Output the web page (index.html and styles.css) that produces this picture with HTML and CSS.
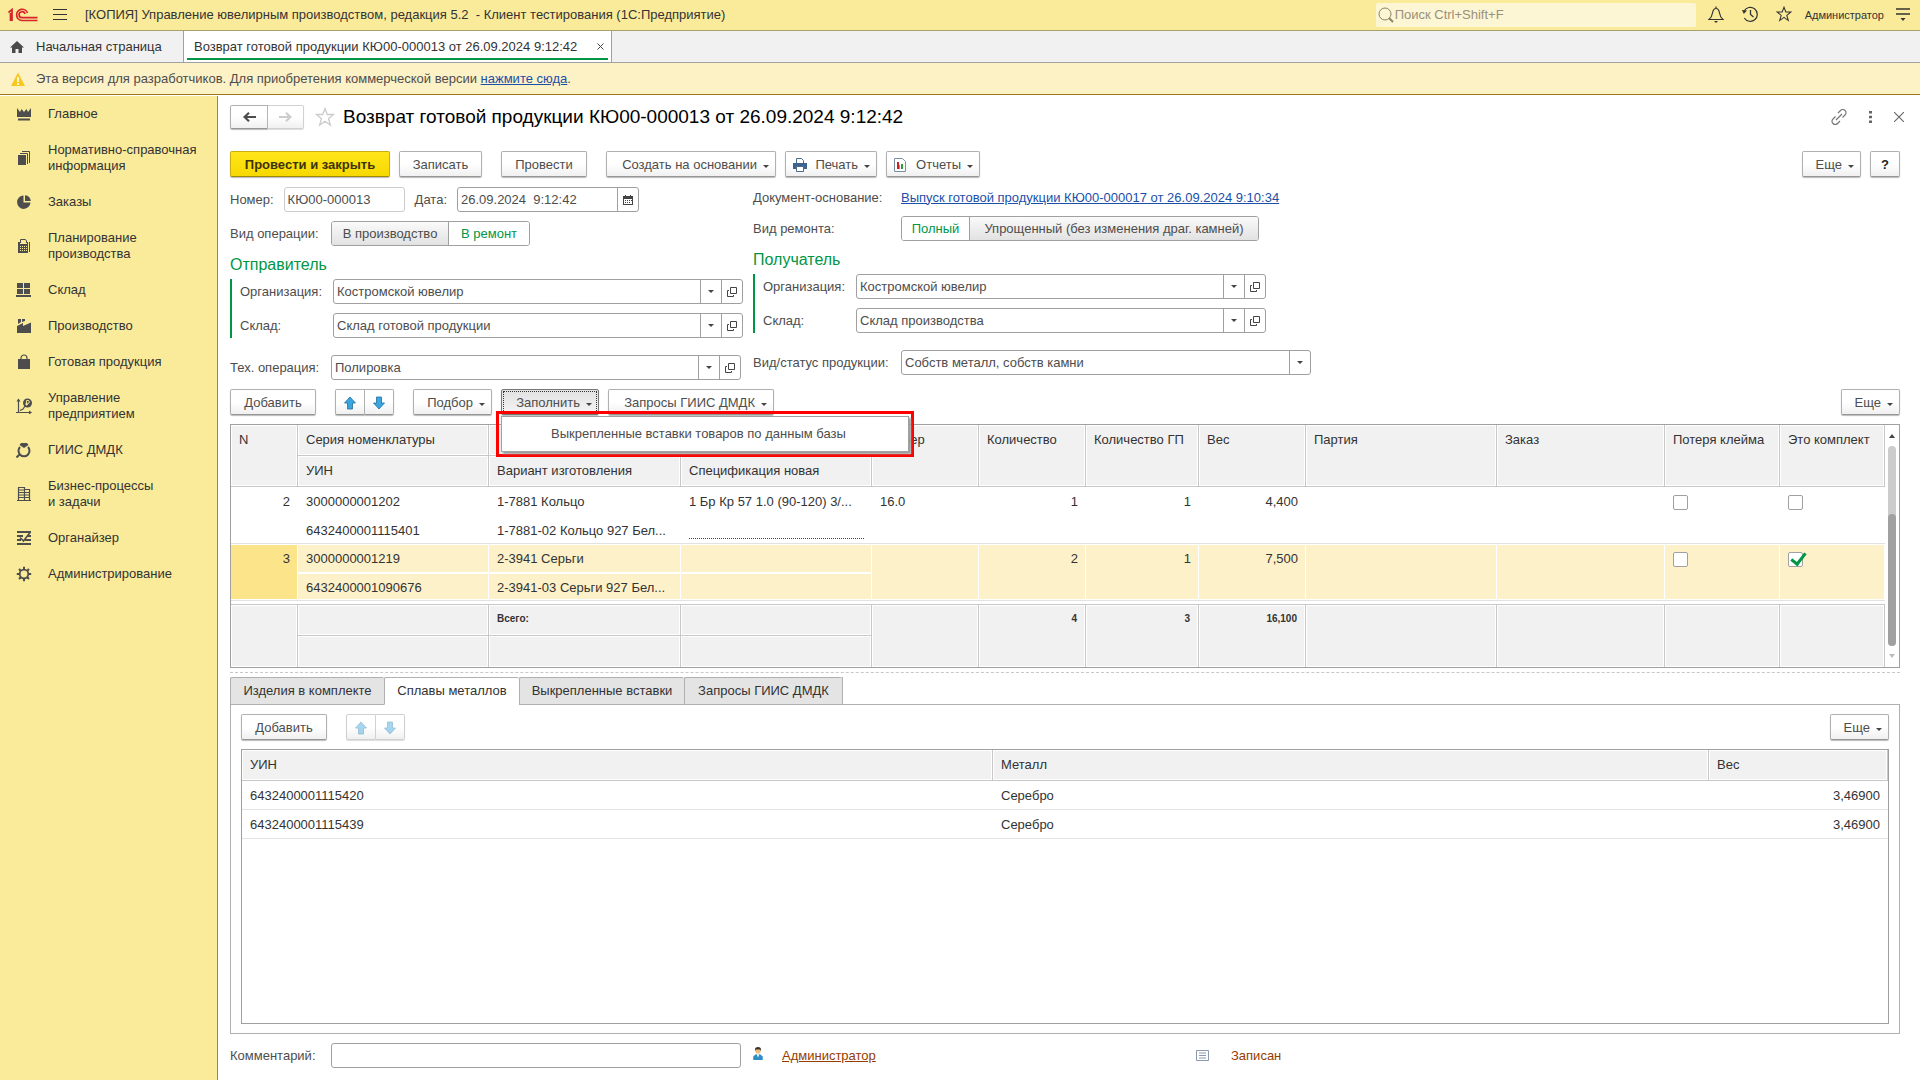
FILE: index.html
```html
<!DOCTYPE html>
<html lang="ru">
<head>
<meta charset="utf-8">
<title>Возврат готовой продукции КЮ00-000013 от 26.09.2024 9:12:42</title>
<link rel="stylesheet" href="styles.css">
</head>
<body>
<svg class="sprite" aria-hidden="true">
  <symbol id="i-open" viewBox="0 0 10 10"><path d="M3.500.5h6v6h-6z M2 3.500H.5v6h6V8" fill="none" stroke="#444"/></symbol>
  <symbol id="i-up" viewBox="0 0 12 14"><path d="M6 1l5.500 6H8.500v6h-5V7H.5z" fill="#3aa6e0" stroke="#22709f" stroke-width=".8"/></symbol>
  <symbol id="i-down" viewBox="0 0 12 14"><path d="M6 13l5.500-6H8.500V1h-5v6H.5z" fill="#3aa6e0" stroke="#22709f" stroke-width=".8"/></symbol>
  <symbol id="i-star" viewBox="0 0 20 20"><path d="M10 1.500l2.300 6h6.200l-5 4.200 1.900 6.500-5.400-3.900-5.400 3.900 1.900-6.500-5-4.200h6.200z" fill="none" stroke="currentColor" stroke-width="1.300"/></symbol>
</svg>

<header class="topbar">
  <svg class="logo" width="30" height="14" viewBox="0 0 30 14"><g fill="none" stroke="#d8232a" stroke-width="1.700"><path d="M.5 4.500L4 1.500V13M2.500 5v8"/><path d="M19.500 5A5.600 5.600 0 1 0 14 12.500H29.500"/><path d="M17 6A3 3 0 1 0 14 9.700H29.500"/></g></svg>
  <svg width="14" height="11" viewBox="0 0 14 11"><path d="M0 .5h14M0 5.500h14M0 10.500h14" stroke="#333"/></svg>
  <h1 class="app-title">[КОПИЯ] Управление ювелирным производством, редакция 5.2 &nbsp;- Клиент тестирования (1С:Предприятие)</h1>
  <div class="search">
    <svg width="16" height="16" viewBox="0 0 16 16"><circle cx="7" cy="7" r="6" fill="none" stroke="#8a8460"/><path d="M11 11l4 4" stroke="#8a8460" stroke-width="2"/></svg>
    <input type="search" aria-label="Поиск" placeholder="Поиск Ctrl+Shift+F">
  </div>
  <div class="top-icons">
    <svg width="16" height="17" viewBox="0 0 16 17"><path d="M1 13.500h14c-2.500-2-3-3.500-3.500-6.500S10 2.500 8 2.500 5 4 4.500 7 3.500 11.500 1 13.500zM8 .5v2" fill="none" stroke="#333" stroke-width="1.200"/><path d="M6 15h4l-2 2z" fill="#333"/></svg>
    <svg width="16" height="16" viewBox="0 0 16 16"><path d="M2 5.200A7 7 0 1 1 2.300 12" fill="none" stroke="#333" stroke-width="1.200"/><path d="M0 4l5 .6L1.800 8z" fill="#333"/><path d="M8.500 4v4.500l3 2.500" fill="none" stroke="#333" stroke-width="1.300"/></svg>
    <svg width="16" height="16"><use href="#i-star"/></svg>
  </div>
  <span class="user">Администратор</span>
  <svg width="14" height="13" viewBox="0 0 14 13"><path d="M0 1h14M0 6h14" stroke="#333" stroke-width="1.300"/><path d="M4.500 10h5L7 13z" fill="#333"/></svg>
</header>

<nav class="tabs">
  <a class="tab" href="#home"><svg width="14" height="12" viewBox="0 0 14 12"><path d="M7 0l7 6.500h-2V12H8.500V8h-3v4H2V6.500H0z" fill="#4a4a4a"/></svg>Начальная страница</a>
  <a class="tab current" href="#doc"><span>Возврат готовой продукции КЮ00-000013 от 26.09.2024 9:12:42</span><svg width="7" height="7" viewBox="0 0 7 7"><path d="M.5.5l6 6M6.500.5l-6 6" stroke="#444"/></svg></a>
</nav>

<div class="notice">
  <svg width="14" height="14" viewBox="0 0 14 14"><path d="M7 .5L14 14H0z" fill="#f7c920"/><path d="M7 5v5M7 11v2" stroke="#fff" stroke-width="1.600"/></svg>
  <p>Эта версия для разработчиков. Для приобретения коммерческой версии <a href="#buy">нажмите сюда</a>.</p>
</div>

<div class="workspace">
  <nav class="sidebar">
    <a href="#s1"><svg viewBox="0 0 16 16"><path d="M1 2l3 4L5.500 3 8 6l2.500-3L12 6l3-4v9H1zM2 12.500h12V14.500H2z"/></svg>Главное</a>
    <a href="#s2"><svg viewBox="0 0 16 16"><path d="M2 5h8v10H2z"/><path d="M4 3.500h7.500V14M6 1.500h7.500V13" fill="none" stroke="#4d4d4d"/></svg>Нормативно-справочная<br>информация</a>
    <a href="#s3"><svg viewBox="0 0 16 16"><path d="M7.500 1.500a6.700 6.700 0 1 0 7 7H7.500zM9 1.200V7h5.800A6.500 6.500 0 0 0 9 1.200z"/></svg>Заказы</a>
    <a href="#s4"><svg viewBox="0 0 16 16"><path d="M4.500 5V1.500h5L10.500 3v2" fill="none" stroke="#4d4d4d"/><path d="M2 4h2v2h7V4h1v11H2zM13 4h1v10h-1z"/><path d="M4 8h1v1H4zM6 8h1v1H6zM8 8h1v1H8zM10 8h1v1h-1zM4 10h1v1H4zM6 10h1v1H6zM8 10h1v1H8zM10 10h1v1h-1zM4 12h1v1H4zM6 12h1v1H6zM8 12h1v1H8zM10 12h1v1h-1z" fill="#faeb9b"/></svg>Планирование<br>производства</a>
    <a href="#s5"><svg viewBox="0 0 16 16"><path d="M1 1h6v5H1zM8 1h6v5H8zM1 7h6v5H1zM8 7h6v5H8zM0 13h15v2H0z"/></svg>Склад</a>
    <a href="#s6"><svg viewBox="0 0 16 16"><path d="M1 8l6-3v3l8-3.500V15H1zM2 1h3v3L2 6zM6 1h3v2L6 4z"/></svg>Производство</a>
    <a href="#s7"><svg viewBox="0 0 16 16"><path d="M2 5h12v10H2z"/><path d="M5 7V4a3 3 0 0 1 6 0v3" fill="none" stroke="#4d4d4d" stroke-width="1.200"/></svg>Готовая продукция</a>
    <a href="#s8"><svg viewBox="0 0 16 16"><path d="M2.500 1v13.500H14M0 14.500h3M4 12.500l3-1.500 2-3" fill="none" stroke="#4d4d4d" stroke-width="1.200"/><path d="M.5 3.500l2-3 2 3zM13 12.500l3 2-3 2z"/><circle cx="11.500" cy="5" r="4.500"/><path d="M10.500 7.500v-5h1.500a1.300 1.300 0 0 1 0 2.800H9.500M9.500 6.500h2.500" fill="none" stroke="#faeb9b" stroke-width=".9"/></svg>Управление<br>предприятием</a>
    <a href="#s9"><svg viewBox="0 0 16 16"><path d="M4 5a5.500 5.500 0 1 0 8 0M4 12l-3.500 3.500" fill="none" stroke="#4d4d4d" stroke-width="2"/><path d="M5 1h6l1.500 2L8 6 3.500 3z"/></svg>ГИИС ДМДК</a>
    <a href="#s10"><svg viewBox="0 0 16 16"><path d="M2.500 15V1.500h6V15M8.500 3.500h5V15M1 14.500h14M3 4h5M3 6.500h5M3 9h5M3 11.500h5M9 6.500h4M9 9h4M9 11.500h4" fill="none" stroke="#4d4d4d" stroke-width="1.200"/></svg>Бизнес-процессы<br>и задачи</a>
    <a href="#s11"><svg viewBox="0 0 16 16"><path d="M1 2h14M1 6h6M11 6h4M1 10h4M9 10h6M1 14h14" stroke="#4d4d4d" stroke-width="1.800"/><path d="M4 7.500L7.500 11 14 2.500" fill="none" stroke="#4d4d4d" stroke-width="1.600"/></svg>Органайзер</a>
    <a href="#s12"><svg viewBox="0 0 16 16"><circle cx="8" cy="8" r="4.300" fill="none" stroke="#4d4d4d" stroke-width="1.800"/><path d="M8 .8v3M8 12.200v3M.8 8h3M12.200 8h3M3 3l2 2M11 11l2 2M13 3l-2 2M5 11l-2 2" stroke="#4d4d4d" stroke-width="2"/></svg>Администрирование</a>
  </nav>

  <main class="doc">
    <div class="doc-head">
      <div class="pair">
        <button type="button" class="btn nav" aria-label="Назад"><svg width="13" height="10" viewBox="0 0 13 10"><path d="M13 5H2M6 .8L1.500 5 6 9.200" fill="none" stroke="#4d4d4d" stroke-width="2.200"/></svg></button>
        <button type="button" class="btn nav off" aria-label="Вперед"><svg width="13" height="10" viewBox="0 0 13 10"><path d="M0 5h11M7 .8L11.500 5 7 9.200" fill="none" stroke="#ccc" stroke-width="2.200"/></svg></button>
      </div>
      <svg class="fav" width="20" height="20"><use href="#i-star"/></svg>
      <h2>Возврат готовой продукции КЮ00-000013 от 26.09.2024 9:12:42</h2>
      <div class="win-icons">
        <svg width="16" height="16" viewBox="0 0 16 16"><g fill="none" stroke="#777" stroke-width="1.200"><path d="M7 4l2.500-2.500a3 3 0 0 1 4.500 0 3 3 0 0 1 0 4.500L11.500 8.500"/><path d="M9 12l-2.500 2.500a3 3 0 0 1-4.500 0 3 3 0 0 1 0-4.500L4.500 7.500"/><path d="M5 11l6-6"/></g></svg>
        <svg width="3" height="12" viewBox="0 0 3 12"><path d="M0 0h3v2.500H0zM0 4.700h3v2.500H0zM0 9.500h3V12H0z" fill="#666"/></svg>
        <svg width="10" height="10" viewBox="0 0 10 10"><path d="M0 0l10 10M10 0L0 10" stroke="#666" stroke-width="1.100"/></svg>
      </div>
    </div>

    <div class="bar commands">
      <button type="button" class="btn primary">Провести и закрыть</button>
      <button type="button" class="btn w83">Записать</button>
      <button type="button" class="btn w86 apart">Провести</button>
      <button type="button" class="btn drop w170 apart">Создать на основании</button>
      <button type="button" class="btn drop w92"><svg width="14" height="14" viewBox="0 0 14 14"><path d="M3.500 5V.5h5L10.500 2.500V5" fill="#fff" stroke="#4a6a8c"/><path d="M0 5h14v6H0z" fill="#3d6490"/><path d="M3.500 8.500h7v5h-7z" fill="#fff" stroke="#4a6a8c"/></svg>Печать</button>
      <button type="button" class="btn drop w94"><svg width="12" height="14" viewBox="0 0 12 14"><path d="M.5.5h8l3 3v10H.5z" fill="#fff" stroke="#7c8ea3"/><path d="M3 4h2v7H3z" fill="#c22"/><path d="M5 7h1v4H5z" fill="#e66"/><path d="M7 6h2v5H7z" fill="#2a9a3a"/></svg>Отчеты</button>
      <button type="button" class="btn drop w59 push">Еще</button>
      <button type="button" class="btn w30 help">?</button>
    </div>

    <form class="fields">
      <div class="col left">
        <div class="row">
          <label for="num">Номер:</label>
          <input id="num" class="box number" value="КЮ00-000013">
          <label for="date" class="date-label">Дата:</label>
          <div class="box combo date"><input id="date" value="26.09.2024  9:12:42"><button type="button" aria-label="Календарь"><svg width="10" height="10" viewBox="0 0 10 10"><path d="M0 1h10v9H0z" fill="#444"/><path d="M1 4h8v5H1z" fill="#fff"/><path d="M2 5h1v1H2zM4 5h1v1H4zM6 5h1v1H6zM8 5h1v1H8zM2 7h1v1H2zM4 7h1v1H4zM6 7h1v1H6zM2 0h1v2H2zM7 0h1v2H7z" fill="#444"/></svg></button></div>
        </div>
        <div class="row">
          <span class="lbl wide">Вид операции:</span>
          <div class="toggle" role="radiogroup" aria-label="Вид операции">
            <label class="w117"><input type="radio" name="op">В производство</label>
            <label class="w81"><input type="radio" name="op" checked>В ремонт</label>
          </div>
        </div>
        <h3>Отправитель</h3>
        <div class="group">
          <div class="row"><label for="org1">Организация:</label><div class="box combo"><input id="org1" value="Костромской ювелир"><button type="button" class="arrow" aria-label="Выбрать"></button><button type="button" aria-label="Открыть"><svg width="10" height="10"><use href="#i-open"/></svg></button></div></div>
          <div class="row"><label for="wh1">Склад:</label><div class="box combo"><input id="wh1" value="Склад готовой продукции"><button type="button" class="arrow" aria-label="Выбрать"></button><button type="button" aria-label="Открыть"><svg width="10" height="10"><use href="#i-open"/></svg></button></div></div>
        </div>
        <div class="row last">
          <label for="tech" class="wide">Тех. операция:</label>
          <div class="box combo"><input id="tech" value="Полировка"><button type="button" class="arrow" aria-label="Выбрать"></button><button type="button" aria-label="Открыть"><svg width="10" height="10"><use href="#i-open"/></svg></button></div>
        </div>
      </div>

      <div class="col right">
        <div class="row base"><span class="lbl wide">Документ-основание:</span><a href="#base">Выпуск готовой продукции КЮ00-000017 от 26.09.2024 9:10:34</a></div>
        <div class="row">
          <span class="lbl wide">Вид ремонта:</span>
          <div class="toggle" role="radiogroup" aria-label="Вид ремонта">
            <label class="w68"><input type="radio" name="rep" checked>Полный</label>
            <label class="w289"><input type="radio" name="rep">Упрощенный (без изменения драг. камней)</label>
          </div>
        </div>
        <h3>Получатель</h3>
        <div class="group">
          <div class="row"><label for="org2">Организация:</label><div class="box combo"><input id="org2" value="Костромской ювелир"><button type="button" class="arrow" aria-label="Выбрать"></button><button type="button" aria-label="Открыть"><svg width="10" height="10"><use href="#i-open"/></svg></button></div></div>
          <div class="row"><label for="wh2">Склад:</label><div class="box combo"><input id="wh2" value="Склад производства"><button type="button" class="arrow" aria-label="Выбрать"></button><button type="button" aria-label="Открыть"><svg width="10" height="10"><use href="#i-open"/></svg></button></div></div>
        </div>
        <div class="row last">
          <label for="kind" class="wide">Вид/статус продукции:</label>
          <div class="box combo"><input id="kind" value="Собств металл, собств камни"><button type="button" class="arrow" aria-label="Выбрать"></button></div>
        </div>
      </div>
    </form>

    <div class="bar table-bar">
      <button type="button" class="btn w86">Добавить</button>
      <div class="pair apart">
        <button type="button" class="btn move" aria-label="Вверх"><svg width="12" height="14"><use href="#i-up"/></svg></button>
        <button type="button" class="btn move" aria-label="Вниз"><svg width="12" height="14"><use href="#i-down"/></svg></button>
      </div>
      <button type="button" class="btn drop w79 apart">Подбор</button>
      <div class="menu-host">
        <button type="button" class="btn drop w98 pressed" aria-expanded="true">Заполнить</button>
        <div class="callout"><div class="menu" role="menu"><button type="button" role="menuitem">Выкрепленные вставки товаров по данным базы</button></div></div>
      </div>
      <button type="button" class="btn drop w166">Запросы ГИИС ДМДК</button>
      <button type="button" class="btn drop w59 push">Еще</button>
    </div>

    <div class="frame goods">
      <table class="grid">
        <colgroup><col class="c-n"><col class="c-main"><col class="c-kind"><col class="c-main"><col class="c-num"><col class="c-num"><col class="c-gp"><col class="c-num"><col class="c-main"><col class="c-order"><col class="c-loss"><col class="c-set"></colgroup>
        <thead>
          <tr><th rowspan="2">N</th><th>Серия номенклатуры</th><th></th><th></th><th rowspan="2">Размер</th><th rowspan="2">Количество</th><th rowspan="2">Количество ГП</th><th rowspan="2">Вес</th><th rowspan="2">Партия</th><th rowspan="2">Заказ</th><th rowspan="2">Потеря клейма</th><th rowspan="2">Это комплект</th></tr>
          <tr><th>УИН</th><th>Вариант изготовления</th><th>Спецификация новая</th></tr>
        </thead>
        <tbody>
          <tr><td rowspan="2" class="r">2</td><td>3000000001202</td><td>1-7881 Кольцо</td><td>1 Бр Кр 57 1.0 (90-120) 3/...</td><td rowspan="2">16.0</td><td rowspan="2" class="r">1</td><td rowspan="2" class="r">1</td><td rowspan="2" class="r">4,400</td><td rowspan="2"></td><td rowspan="2"></td><td rowspan="2"><input type="checkbox" aria-label="Потеря клейма"></td><td rowspan="2"><input type="checkbox" aria-label="Это комплект"></td></tr>
          <tr class="second"><td>6432400001115401</td><td>1-7881-02 Кольцо 927 Бел...</td><td><span class="required"></span></td></tr>
        </tbody>
        <tbody class="selected">
          <tr><td rowspan="2" class="r">3</td><td>3000000001219</td><td>2-3941 Серьги</td><td></td><td rowspan="2"></td><td rowspan="2" class="r">2</td><td rowspan="2" class="r">1</td><td rowspan="2" class="r">7,500</td><td rowspan="2"></td><td rowspan="2"></td><td rowspan="2"><input type="checkbox" aria-label="Потеря клейма"></td><td rowspan="2"><input type="checkbox" aria-label="Это комплект" checked></td></tr>
          <tr class="second"><td>6432400001090676</td><td>2-3941-03 Серьги 927 Бел...</td><td></td></tr>
        </tbody>
        <tfoot>
          <tr class="gap"><td colspan="12"></td></tr>
          <tr class="total"><th rowspan="2"></th><th></th><th>Всего:</th><th></th><th rowspan="2"></th><th rowspan="2" class="r">4</th><th rowspan="2" class="r">3</th><th rowspan="2" class="r">16,100</th><th rowspan="2"></th><th rowspan="2"></th><th rowspan="2"></th><th rowspan="2"></th></tr>
          <tr class="total"><th></th><th></th><th></th></tr>
        </tfoot>
      </table>
      <div class="scroll">
        <svg width="6" height="4" viewBox="0 0 6 4"><path d="M0 4l3-4 3 4z" fill="#444"/></svg>
        <div class="track"><div class="thumb"></div></div>
        <svg width="6" height="4" viewBox="0 0 6 4"><path d="M0 0l3 4 3-4z" fill="#bbb"/></svg>
      </div>
    </div>

    <div class="splitter"></div>

    <div class="page-tabs" role="tablist">
      <button type="button" role="tab" class="w154">Изделия в комплекте</button>
      <button type="button" role="tab" class="w135 on" aria-selected="true">Сплавы металлов</button>
      <button type="button" role="tab" class="w165">Выкрепленные вставки</button>
      <button type="button" role="tab" class="w158">Запросы ГИИС ДМДК</button>
      <span class="rest"></span>
    </div>
    <section class="panel">
      <div class="bar">
        <button type="button" class="btn w86">Добавить</button>
        <div class="pair apart">
          <button type="button" class="btn move off" aria-label="Вверх"><svg width="12" height="14"><use href="#i-up"/></svg></button>
          <button type="button" class="btn move off" aria-label="Вниз"><svg width="12" height="14"><use href="#i-down"/></svg></button>
        </div>
        <button type="button" class="btn drop w59 push">Еще</button>
      </div>
      <div class="frame alloys">
        <table class="grid">
          <colgroup><col class="a-uin"><col class="a-metal"><col class="a-weight"></colgroup>
          <thead><tr><th>УИН</th><th>Металл</th><th>Вес</th></tr></thead>
          <tbody>
            <tr><td>6432400001115420</td><td>Серебро</td><td class="r">3,46900</td></tr>
            <tr><td>6432400001115439</td><td>Серебро</td><td class="r">3,46900</td></tr>
          </tbody>
        </table>
      </div>
    </section>

    <footer class="doc-foot">
      <label for="comment">Комментарий:</label>
      <input id="comment" class="box">
      <svg class="person" width="10" height="13" viewBox="0 0 11 15"><circle cx="5.500" cy="4.500" r="3" fill="#f0bd78"/><path d="M2 5V3a3.500 3 0 0 1 7 0v2L8 3H3z" fill="#3a3026"/><path d="M0 15v-4l3-2.500h5l3 2.500v4z" fill="#2f8fc4"/><path d="M4 8.500h3L5.500 12z" fill="#fff"/></svg>
      <a class="author" href="#author">Администратор</a>
      <svg class="state" width="13" height="11" viewBox="0 0 13 11"><path d="M.5.5h12v10H.5z" fill="#fff" stroke="#8a99ad"/><path d="M3 3h7M3 5.500h7M3 8h7" stroke="#8a99ad"/></svg>
      <span class="saved">Записан</span>
    </footer>
  </main>
</div>
</body>
</html>
```
FILE: styles.css
```css
* { box-sizing: border-box; }

body {
  margin: 0;
  min-height: 100vh;
  display: flex;
  flex-direction: column;
  background: #fff;
  color: #333;
  font: 13px/16px "Liberation Sans", Arial, sans-serif;
}

h1, h2, h3, p { margin: 0; font-weight: normal; }
svg { display: block; flex: none; }
input, button { font: inherit; color: inherit; }
button { cursor: pointer; }
.sprite { width: 0; height: 0; position: absolute; }

/* window header */
.topbar {
  display: flex;
  align-items: center;
  height: 31px;
  padding: 0 10px 1px 8px;
  background: #faeb9b;
  border-bottom: 1px solid #a8a06c;
}
.logo { margin-right: 15px; }
.app-title { flex: 1; margin-left: 18px; font-size: 13px; }
.search {
  display: flex;
  align-items: center;
  width: 320px;
  height: 24px;
  padding-left: 2px;
  background: #fdf6d4;
  border-radius: 2px;
}
.search input {
  flex: 1;
  padding: 0 1px;
  border: 0;
  background: none;
  outline: none;
}
.search input::placeholder { color: #98917a; }
.top-icons { display: flex; gap: 18px; margin: 0 13px 0 12px; color: #333; }
.user { margin-right: 12px; font-size: 11px; }

/* open windows */
.tabs {
  display: flex;
  height: 32px;
  background: #f1f1f1;
  border-bottom: 1px solid #a0a0a0;
}
.tab {
  display: flex;
  align-items: center;
  gap: 12px;
  width: 184px;
  padding: 0 0 0 10px;
  color: #333;
  text-decoration: none;
  border-right: 1px solid #a0a0a0;
}
.tab.current {
  width: 428px;
  padding-right: 7px;
  justify-content: space-between;
  background: linear-gradient(#009646, #009646) 3px 27px / 421px 2px no-repeat #fff;
}

.notice {
  display: flex;
  align-items: center;
  gap: 11px;
  height: 32px;
  padding-left: 11px;
  background: #fdf1c6;
  border-bottom: 1px solid #9a7b1c;
  color: #4d4d4d;
}
a { color: #1b4fa8; }

.workspace { flex: 1; display: flex; }

.sidebar {
  width: 218px;
  flex: none;
  margin-top: 1px;
  background: #faeb9b;
  border-right: 1px solid #958a50;
}
.sidebar a {
  display: flex;
  align-items: center;
  gap: 16px;
  padding: 10px 0 10px 16px;
  color: #333;
  text-decoration: none;
}
.sidebar svg { width: 16px; height: 16px; fill: #4d4d4d; }

.doc {
  flex: 1;
  min-width: 0;
  display: flex;
  flex-direction: column;
  padding: 9px 20px 12px 12px;
  color: #4d4d4d;
}

.doc-head { display: flex; align-items: center; height: 25px; }
.fav { margin: 0 8px 0 11px; color: #ccc; }
.doc-head h2 { flex: 1; font-size: 19px; line-height: 24px; color: #000; }
.win-icons { display: flex; align-items: center; gap: 22px; margin-right: -4px; }

/* command buttons */
.bar { display: flex; gap: 9px; }
.commands { margin-top: 22px; }
.btn {
  display: flex;
  align-items: center;
  justify-content: center;
  height: 26px;
  padding: 1px 6px 0;
  white-space: nowrap;
  background: linear-gradient(#fff 50%, #f0f0f0);
  border: 1px solid #b0b0b0;
  border-bottom-color: #969696;
  border-radius: 2px;
  box-shadow: 0 1px 1px #bbb;
}
.btn.primary {
  width: 160px;
  font-weight: bold;
  color: #3c3408;
  background: linear-gradient(#ffe61a, #f7d800);
  border-color: #c8ae10;
  border-bottom-color: #a08a00;
}
.btn.drop::after {
  content: "";
  margin: 4px 0 0 6px;
  border: 3px solid transparent;
  border-top-color: #444;
  border-bottom: 0;
}
.btn.drop { justify-content: flex-end; }
.btn.drop svg { margin-right: auto; margin-left: 1px; }
.btn.help { font-weight: bold; color: #222; }
.apart { margin-left: 10px; }
.push { margin-left: auto; }
.w30 { width: 30px; }
.w59 { width: 59px; }
.w79 { width: 79px; }
.w83 { width: 83px; }
.w86 { width: 86px; }
.w92 { width: 92px; }
.w94 { width: 94px; }
.w98 { width: 98px; }
.w166 { width: 166px; }
.w170 { width: 170px; }

.pair { display: flex; }
.pair .btn { width: 30px; border-radius: 2px 0 0 2px; }
.pair .btn + .btn { border-left-width: 0; width: 29px; border-radius: 0 2px 2px 0; }
.pair .btn.nav { width: 38px; height: 24px; }
.pair .btn.nav + .btn.nav { width: 36px; }
.btn.off { border-color: #d0d0d0; box-shadow: 0 1px 1px #ddd; }
.btn.move.off svg { opacity: .45; }
.btn.pressed {
  background: linear-gradient(#e2e2e2, #f4f4f4);
  border-color: #777;
  outline: 1px dotted #333;
  outline-offset: -3px;
}

/* document fields */
.fields {
  display: grid;
  grid-template-columns: 513px 558px;
  gap: 10px;
  align-items: start;
  margin-top: 10px;
}
.col { display: flex; flex-direction: column; gap: 9px; }
.row { display: flex; align-items: center; height: 25px; }
.row.base { height: 20px; padding-top: 1px; }
.box {
  height: 25px;
  padding: 0 3px;
  background: #fff;
  border: 1px solid #a0a0a0;
  border-radius: 3px;
  outline: none;
}
.number { width: 121px; margin-left: auto; border-color: #ccc; }
.date-label { margin: 0 0 0 10px; }
.left .row .date { flex: none; width: 182px; margin: 0 104px 0 auto; }
.combo { display: flex; padding: 0; width: 410px; }
.combo input {
  flex: 1;
  min-width: 0;
  padding: 0 3px;
  border: 0;
  background: none;
  outline: none;
  white-space: pre;
}
.combo button {
  display: flex;
  align-items: center;
  justify-content: center;
  width: 21px;
  padding: 0;
  background: none;
  border: 0;
  border-left: 1px solid #a0a0a0;
}
.combo .arrow::after {
  content: "";
  border: 3px solid transparent;
  border-top-color: #444;
  border-bottom: 0;
}
.left .wide { width: 101px; }
.right .wide { width: 148px; }
.col h3 {
  margin: 2px 0 -3px;
  font-size: 16px;
  line-height: 16px;
  color: #009646;
}
.group {
  display: flex;
  flex-direction: column;
  gap: 9px;
  padding-left: 8px;
  border-left: 2px solid #009646;
}
.group label { width: 93px; }
.row.last { margin-top: 8px; }

.toggle {
  display: flex;
  height: 25px;
  border: 1px solid #a0a0a0;
  border-radius: 3px;
  overflow: hidden;
}
.toggle label {
  display: flex;
  align-items: center;
  justify-content: center;
  background: linear-gradient(#fafafa, #e2e2e2);
}
.toggle label + label { border-left: 1px solid #a0a0a0; }
.toggle input { appearance: none; width: 0; margin: 0; }
.toggle label:has(:checked) { background: #fff; color: #009646; }
.w68 { width: 67px; }
.w81 { width: 81px; }
.w117 { width: 116px; }
.w289 { width: 289px; }

/* drop-down of the fill command */
.table-bar { margin-top: 9px; }
.menu-host { position: relative; }
.callout {
  position: absolute;
  z-index: 2;
  left: -5px;
  top: 22px;
  width: 418px;
  height: 46px;
  padding: 2px;
  border: 3px solid #fe0000;
}
.menu {
  height: 36px;
  width: 408px;
  background: #fff;
  border: 1px solid #a0a0a0;
  box-shadow: 2px 2px 2px #999;
}
.menu button {
  width: 100%;
  height: 100%;
  padding: 0 0 0 49px;
  text-align: left;
  background: none;
  border: 0;
}

/* tables */
.frame {
  display: flex;
  border: 1px solid #a0a0a0;
  color: #333;
}
.goods { margin-top: 9px; }
.grid {
  flex: 1;
  width: 0;
  table-layout: fixed;
  border-collapse: separate;
  border-spacing: 0;
}
.grid th, .grid td {
  height: 29px;
  padding: 7px 8px 0;
  vertical-align: top;
  text-align: left;
  white-space: nowrap;
  overflow: hidden;
  font-weight: normal;
}
.grid th {
  height: 31px;
  background: #f1f1f1;
  border: solid #c8c8c8;
  border-width: 0 1px 1px 0;
  box-shadow: inset 0 0 0 1px #fff;
}
.grid .r { text-align: right; }
.grid .second td { height: 28px; }
.goods tbody td[rowspan], .goods .second td { border-bottom: 1px solid #e2e2e2; }
.selected td {
  background: #fdf1c9;
  box-shadow: inset -1px 1px #fff, inset 0 -1px #fff;
}
.selected td:first-child[rowspan] { background: #fbe489; }
.grid .gap td { height: 3px; padding: 0; }
.grid .total th {
  height: 31px;
  padding-top: 6px;
  font-size: 10px;
  font-weight: bold;
}
.grid .gap + .total th { height: 32px; border-top-width: 1px; }
.total:last-child th, .gap + .total th[rowspan] { border-bottom: 0; }
.grid input {
  display: block;
  appearance: none;
  width: 15px;
  height: 15px;
  margin: 1px 0 0;
  background: #fff;
  border: 1px solid #a0a0a0;
  border-radius: 2px;
}
.grid input:checked::before {
  content: "";
  display: block;
  width: 6px;
  height: 12px;
  margin: -3px 0 0 5px;
  border: solid #009646;
  border-width: 0 3px 3px 0;
  transform: rotate(38deg);
}
.required { display: block; height: 16px; border-bottom: 1px dotted #e00; }
.c-n { width: 67px; }
.c-main { width: 191px; }
.c-kind { width: 192px; }
.c-num { width: 107px; }
.c-gp { width: 113px; }
.c-order { width: 168px; }
.c-loss { width: 115px; }
.c-set { width: 105px; }

.scroll {
  display: flex;
  flex-direction: column;
  align-items: center;
  gap: 8px;
  width: 14px;
  padding: 9px 0;
}
.track {
  flex: 1;
  display: flex;
  align-items: flex-end;
  width: 8px;
  background: #ccc;
  border-radius: 4px;
}
.thumb { width: 8px; height: 66%; background: #a0a0a0; border-radius: 4px; }

.splitter { margin-top: 4px; border-top: 1px dashed #c8c8c8; }

/* lower pages */
.page-tabs { display: flex; margin-top: 4px; height: 28px; }
.page-tabs button {
  padding: 0;
  color: #333;
  background: #e4e4e4;
  border: 1px solid #b0b0b0;
  border-right-width: 0;
  border-radius: 2px 2px 0 0;
}
.page-tabs button.on { background: #fff; border-bottom-color: #fff; }
.page-tabs .rest { flex: 1; border: solid #b0b0b0; border-width: 0 0 1px 1px; }
.w135 { width: 135px; }
.w154 { width: 154px; }
.w158 { width: 158px; }
.w165 { width: 165px; }
.panel {
  flex: 1;
  display: flex;
  flex-direction: column;
  gap: 9px;
  padding: 9px 10px;
  border: 1px solid #b0b0b0;
  border-top: 0;
}
.alloys { flex: 1; align-items: flex-start; }
.alloys td { border-bottom: 1px solid #e2e2e2; }
.a-uin { width: 751px; }
.a-metal { width: 716px; }
.a-weight { width: 179px; }

.doc-foot { display: flex; align-items: center; margin-top: 9px; }
.doc-foot label { width: 101px; }
.doc-foot .box { width: 410px; }
.person { margin: 0 19px 4px 12px; }
.author, .saved { color: #963c00; }
.author { width: 414px; }
.saved { margin-left: 22px; }
```
